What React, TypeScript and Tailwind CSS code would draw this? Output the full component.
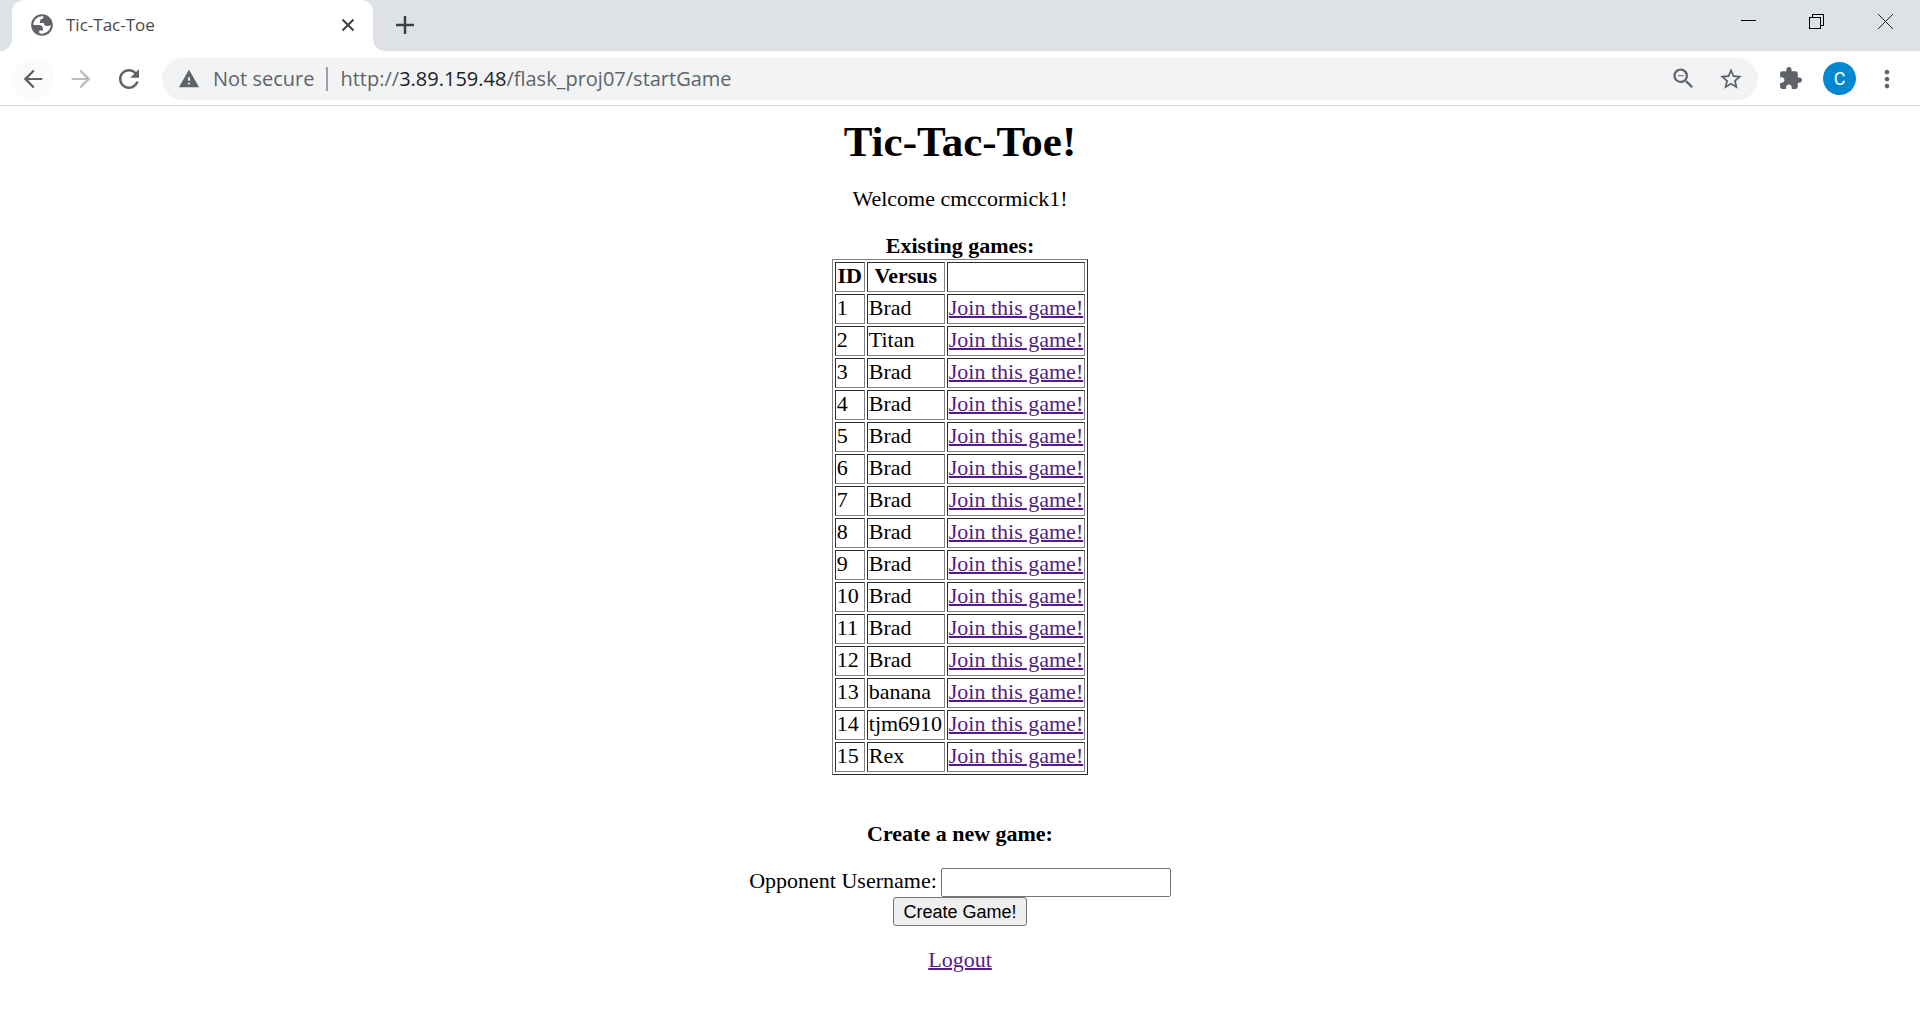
import type { ReactNode } from "react";

const games = [
  "Brad", "Titan", "Brad", "Brad", "Brad", "Brad", "Brad", "Brad",
  "Brad", "Brad", "Brad", "Brad", "banana", "tjm6910", "Rex",
];

function Icon({ d, className }: { d: string; className: string }) {
  return (
    <svg viewBox="0 0 24 24" fill="currentColor" fillRule="evenodd" className={className} aria-hidden="true">
      <path d={d} />
    </svg>
  );
}

function IconButton({ label, className, children }: { label: string; className: string; children: ReactNode }) {
  return (
    <button type="button" aria-label={label} className={`flex shrink-0 items-center justify-center ${className}`}>
      {children}
    </button>
  );
}

function TabStrip() {
  return (
    <div className="flex h-[51px] bg-white">
      <div className="w-3 rounded-br-xl bg-[#dee1e6]" />
      <div className="flex bg-[#dee1e6]">
        <div className="flex w-[361px] items-center rounded-t-xl bg-white pr-[15px] pb-0.5 pl-[17px]">
          <Icon
            className="size-[26px] text-[#5f6368]"
            d="M12 2C6.48 2 2 6.48 2 12s4.48 10 10 10 10-4.480 10-10S17.520 2 12 2zM4 12h4.400c3.407.022 4.922 1.730 4.543 5.127H9.488v2.470a8.004 8.004 0 0 0 10.498-8.083C19.327 12.504 18.332 13 17 13c-2.137 0-3.206-.916-3.206-2.750h-3.748c-.274-2.728.683-4.092 2.870-4.092 0-.975.327-1.597.811-1.970A8.004 8.004 0 0 0 4 12z"
          />
          <span className="ml-[11px] flex-1 text-[17px] text-[#45494d]">Tic-Tac-Toe</span>
          <IconButton label="Close tab" className="size-5">
            <svg viewBox="0 0 14 14" className="size-[14px]" fill="none" stroke="#3c4043" strokeWidth="2">
              <path d="M1.500 1.500l11 11M12.500 1.500l-11 11" />
            </svg>
          </IconButton>
        </div>
      </div>
      <div className="flex flex-1 items-center rounded-bl-xl bg-[#dee1e6] pb-px pl-[22px]">
        <IconButton label="New tab" className="size-5">
          <svg viewBox="0 0 18 18" className="size-[18px]" fill="none" stroke="#3c4043" strokeWidth="2.500">
            <path d="M9 0v18M0 9h18" />
          </svg>
        </IconButton>
        <div className="flex-1" />
        <div className="flex h-full items-start">
          <IconButton label="Minimize" className="h-[43px] w-[68px]">
            <svg viewBox="0 0 15 15" className="size-[15px]" shapeRendering="crispEdges">
              <path d="M0 6h15v1H0z" />
            </svg>
          </IconButton>
          <IconButton label="Restore" className="h-[43px] w-[68px]">
            <svg viewBox="0 0 15 15" className="size-[15px]" fill="none" stroke="#000" shapeRendering="crispEdges">
              <path d="M.5 3.500h11v11H.5zM3.500 3.500v-3h11v11h-3" />
            </svg>
          </IconButton>
          <IconButton label="Close" className="h-[43px] w-[70px]">
            <svg viewBox="0 0 15 15" className="size-[15px]" fill="none" stroke="#222">
              <path d="M0 0l15 15M15 0L0 15" />
            </svg>
          </IconButton>
        </div>
      </div>
    </div>
  );
}

function Toolbar() {
  return (
    <div className="flex h-[55px] items-center border-b border-[#d9dbde] bg-white pt-px pl-3 text-[#5f6368]">
      <IconButton label="Back" className="size-[42px] rounded-full bg-[#fbfbfb]">
        <Icon className="size-7" d="M20 11.100H7.830l5.590-5.690L12 4l-8 8 8 8 1.410-1.410L7.830 12.900H20v-1.800z" />
      </IconButton>
      <IconButton label="Forward" className="ml-[6px] size-[42px] text-[#babcbe]">
        <Icon className="size-7" d="M12 4l-1.410 1.410 5.580 5.690H4v1.800h12.170l-5.580 5.690L12 20l8-8z" />
      </IconButton>
      <IconButton label="Reload" className="ml-[6px] size-[42px]">
        <Icon
          className="size-[30px]"
          d="M17.650 6.350C16.200 4.900 14.210 4 12 4c-4.420 0-7.990 3.580-7.990 8s3.570 8 7.990 8c3.730 0 6.840-2.550 7.730-6h-2.080c-.82 2.330-3.040 4-5.650 4-3.310 0-6-2.690-6-6s2.690-6 6-6c1.660 0 3.140.69 4.220 1.780L13 11h7V4l-2.350 2.350z"
        />
      </IconButton>
      <div className="ml-3 flex h-[42px] min-w-0 flex-1 items-center rounded-full bg-[#f1f3f4] pr-[11px] pl-4 text-[20px]">
        <Icon className="size-[22px]" d="M1 21h22L12 2 1 21zm12-3h-2v-2h2v2zm0-4h-2v-4h2v4z" />
        <span className="ml-[13px] whitespace-nowrap">Not secure</span>
        <span className="mx-3 h-6 w-0.5 bg-[#9aa0a6]" />
        <span className="flex-1 whitespace-nowrap">
          http://<span className="text-[#202124]">3.89.159.48</span>/flask_proj07/startGame
        </span>
        <IconButton label="Zoom" className="size-8">
          <Icon
            className="size-[27px]"
            d="M15.500 14h-.79l-.28-.27A6.471 6.471 0 0 0 16 9.500 6.500 6.500 0 1 0 9.500 16c1.610 0 3.090-.59 4.230-1.570l.27.28v.79l5 4.990L20.490 19l-4.990-5zm-6 0C7.010 14 5 11.990 5 9.500S7.010 5 9.500 5 14 7.010 14 9.500 11.990 14 9.500 14zM7 9h5v1H7z"
          />
        </IconButton>
        <IconButton label="Bookmark this tab" className="ml-4 size-8">
          <Icon
            className="size-[26px]"
            d="M22 9.240l-7.190-.62L12 2 9.190 8.630 2 9.240l5.460 4.730L5.820 21 12 17.270 18.180 21l-1.630-7.030L22 9.240zM12 15.400l-3.760 2.270 1-4.280-3.320-2.880 4.380-.38L12 6.100l1.710 4.040 4.380.38-3.320 2.880 1 4.280L12 15.400z"
          />
        </IconButton>
      </div>
      <IconButton label="Extensions" className="ml-4 size-8">
        <Icon
          className="size-[25px]"
          d="M20.500 11H19V7c0-1.100-.9-2-2-2h-4V3.500a2.500 2.500 0 0 0-5 0V5H4c-1.100 0-1.990.9-1.990 2v3.800H3.500c1.490 0 2.700 1.210 2.700 2.700s-1.210 2.700-2.700 2.700H2V20c0 1.100.9 2 2 2h3.800v-1.500c0-1.490 1.210-2.700 2.700-2.700s2.700 1.210 2.700 2.700V22H17c1.100 0 2-.9 2-2v-4h1.500a2.500 2.500 0 0 0 0-5z"
        />
      </IconButton>
      <IconButton label="Profile" className="ml-[17px] size-[33px] rounded-full bg-[#0288d1] font-[Roboto] text-[18px] text-white">
        C
      </IconButton>
      <IconButton label="Menu" className="mr-[17px] ml-[15px] size-8">
        <Icon
          className="size-[28px]"
          d="M12 8c1.100 0 2-.9 2-2s-.9-2-2-2-2 .9-2 2 .9 2 2 2zm0 2c-1.100 0-2 .9-2 2s.9 2 2 2 2-.9 2-2-.9-2-2-2zm0 6c-1.100 0-2 .9-2 2s.9 2 2 2 2-.9 2-2-.9-2-2-2z"
        />
      </IconButton>
    </div>
  );
}

const cell = "border border-t-[#2c2c2c] border-r-[#808080] border-b-[#808080] border-l-[#2c2c2c] px-px pt-0 pb-0.5";
const link = "text-[#551a8b] underline decoration-2";

export default function App() {
  return (
    <div className="min-h-screen bg-white">
      <header className="font-['Open_Sans','Noto_Sans',sans-serif]">
        <TabStrip />
        <Toolbar />
      </header>
      <main className="flex flex-col items-center pt-[11px] font-['Liberation_Serif',serif] text-[22px] leading-[26px] text-black">
        <h1 className="text-[43px] leading-[50px] font-bold">Tic-Tac-Toe!</h1>
        <p className="mt-[19px]">Welcome cmccormick1!</p>
        <table className="mt-[21px] border-separate border-spacing-0.5 border border-t-[#808080] border-r-[#2c2c2c] border-b-[#2c2c2c] border-l-[#808080]">
          <caption className="caption-top font-bold whitespace-nowrap">Existing games:</caption>
          <thead>
            <tr>
              <th className={`w-[30px] ${cell}`}>ID</th>
              <th className={`w-[78px] ${cell}`}>Versus</th>
              <th className={cell} aria-label="Action" />
            </tr>
          </thead>
          <tbody>
            {games.map((name, i) => (
              <tr key={i}>
                <td className={cell}>{i + 1}</td>
                <td className={cell}>{name}</td>
                <td className={cell}>
                  <a href="#" className={link}>Join this game!</a>
                </td>
              </tr>
            ))}
          </tbody>
        </table>
        <h2 className="mt-[46px] font-bold">Create a new game:</h2>
        <form className="mt-[21px] flex flex-col items-center" onSubmit={(e) => e.preventDefault()}>
          <div className="flex items-start gap-1">
            <label htmlFor="opponent">Opponent Username:</label>
            <input
              id="opponent"
              type="text"
              className="h-[29px] w-[230px] rounded-xs border border-[#767676] px-1 font-['Liberation_Sans',sans-serif] text-[18px]"
            />
          </div>
          <button
            type="submit"
            className="h-[29px] rounded-[3px] border border-[#767676] bg-[#efefef] px-[9px] font-['Liberation_Sans',sans-serif] text-[18px] leading-[26px]"
          >
            Create Game!
          </button>
        </form>
        <a href="#" className={`mt-[21px] ${link}`}>Logout</a>
      </main>
    </div>
  );
}
